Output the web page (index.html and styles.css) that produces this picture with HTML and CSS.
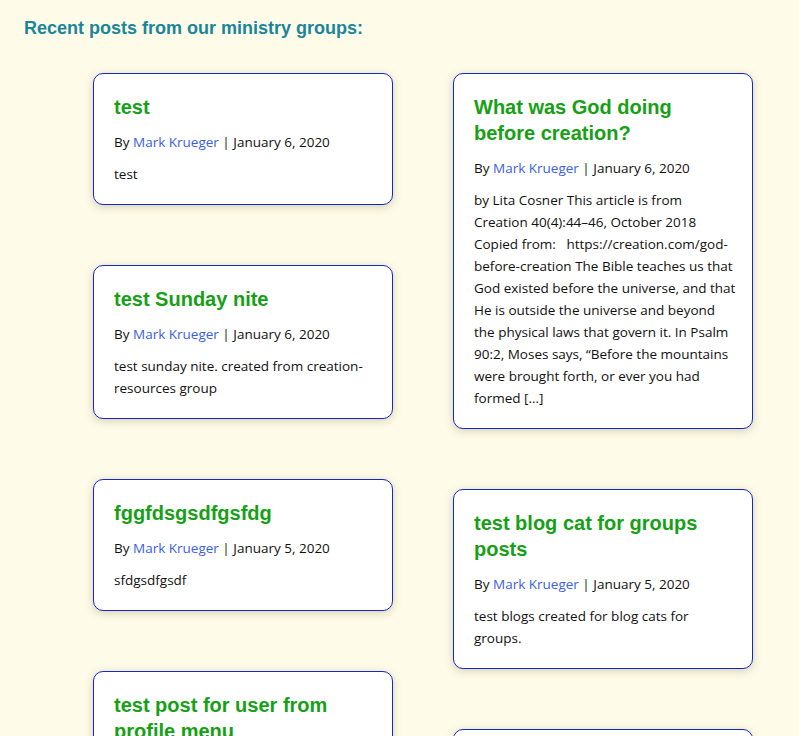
FILE: index.html
```html
<!DOCTYPE html>
<html>
<head>
<meta charset="utf-8">
<link rel="stylesheet" href="styles.css">
</head>
<body>
<h2 class="heading">Recent posts from our ministry groups:</h2>
<div class="columns">
  <div class="col">
    <div class="card">
      <h3 class="title">test</h3>
      <p class="meta">By <a href="#">Mark Krueger</a> | January 6, 2020</p>
      <p class="excerpt">test</p>
    </div>
    <div class="card">
      <h3 class="title">test Sunday nite</h3>
      <p class="meta">By <a href="#">Mark Krueger</a> | January 6, 2020</p>
      <p class="excerpt">test sunday nite. created from creation-resources group</p>
    </div>
    <div class="card">
      <h3 class="title">fggfdsgsdfgsfdg</h3>
      <p class="meta">By <a href="#">Mark Krueger</a> | January 5, 2020</p>
      <p class="excerpt">sfdgsdfgsdf</p>
    </div>
    <div class="card">
      <h3 class="title">test post for user from profile menu</h3>
      <p class="meta">By <a href="#">Mark Krueger</a> | January 5, 2020</p>
      <p class="excerpt">test post</p>
    </div>
  </div>
  <div class="col">
    <div class="card">
      <h3 class="title">What was God doing before creation?</h3>
      <p class="meta">By <a href="#">Mark Krueger</a> | January 6, 2020</p>
      <p class="excerpt">by Lita Cosner This article is from Creation 40(4):44–46, October 2018 Copied from: &nbsp; https://creation.com/god-before-creation The Bible teaches us that God existed before the universe, and that He is outside the universe and beyond the physical laws that govern it. In Psalm 90:2, Moses says, “Before the mountains were brought forth, or ever you had formed […]</p>
    </div>
    <div class="card">
      <h3 class="title">test blog cat for groups posts</h3>
      <p class="meta">By <a href="#">Mark Krueger</a> | January 5, 2020</p>
      <p class="excerpt">test blogs created for blog cats for groups.</p>
    </div>
    <div class="card">
      <h3 class="title">another post</h3>
      <p class="meta">By <a href="#">Mark Krueger</a> | January 5, 2020</p>
      <p class="excerpt">test</p>
    </div>
  </div>
</div>
</body>
</html>
```
FILE: styles.css
```css
html, body {
  margin: 0;
  padding: 0;
  background: #fefbe8;
}
body {
  font-family: "Open Sans", "Noto Sans", sans-serif;
  color: #111;
}
.heading {
  margin: 0;
  padding: 17px 0 0 24px;
  font-family: "Liberation Sans", Arial, sans-serif;
  font-size: 18px;
  line-height: 22px;
  font-weight: bold;
  color: #1a869c;
}
.columns {
  display: flex;
  gap: 60px;
  margin: 34px 0 0 93px;
  align-items: flex-start;
}
.col {
  width: 300px;
  display: flex;
  flex-direction: column;
  gap: 60px;
}
.card {
  background: #fff;
  border: 1px solid #1428c8;
  border-radius: 10px;
  padding: 20px 20px 19px;
  box-shadow: 0 2px 8px rgba(90, 80, 20, 0.25);
}
.title {
  margin: 0 0 11px;
  font-family: "Liberation Sans", Arial, sans-serif;
  font-size: 20px;
  line-height: 26px;
  font-weight: bold;
  color: #16a016;
}
.meta, .excerpt {
  margin: 0;
  font-size: 13.5px;
  line-height: 22px;
}
.excerpt {
  margin-right: -5px;
}
.meta {
  margin-bottom: 10px;
}
.meta a {
  color: #3a5ee8;
  text-decoration: none;
}
```
